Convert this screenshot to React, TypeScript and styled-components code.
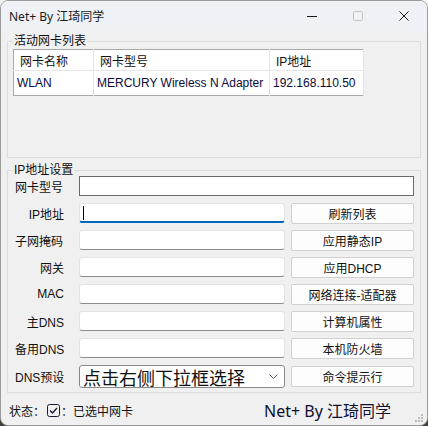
import styled, { createGlobalStyle } from 'styled-components';

const GlobalStyle = createGlobalStyle`
  html, body { margin: 0; padding: 0; }
  body {
    width: 428px;
    height: 426px;
    overflow: hidden;
    background: linear-gradient(#f4f4f4 0%, #f4f4f4 50%, #3d3d36 100%);
    font-family: "Liberation Sans", "Noto Sans CJK SC", sans-serif;
  }
`;

const Window = styled.div`
  width: 428px;
  height: 426px;
  box-sizing: border-box;
  border: 1px solid #9a9a9a;
  border-radius: 8px;
  overflow: hidden;
  display: flex;
  flex-direction: column;
  background: #f0f0f0;
`;

const TitleBar = styled.div`
  height: 30px;
  flex: none;
  display: flex;
  align-items: center;
  background: #eef2f6;
`;

const Title = styled.div`
  flex: 1;
  padding-left: 8px;
  font-family: "Noto Sans", "Noto Sans CJK SC", sans-serif;
  font-size: 12px;
  color: #1b1b1b;
`;

const CaptionButton = styled.div<{ $disabled?: boolean }>`
  width: 46px;
  height: 30px;
  display: flex;
  align-items: center;
  justify-content: center;
  color: ${p => (p.$disabled ? '#c4c4c4' : '#1b1b1b')};
`;

const Main = styled.div`
  flex: 1;
  padding: 4px 6px 0 6px;
  display: flex;
  flex-direction: column;
  gap: 6px;
`;

const Group = styled.fieldset<{ $h: number }>`
  margin: 0;
  height: ${p => p.$h}px;
  box-sizing: border-box;
  border: 1px solid #dcdcdc;
  padding: 2px 5px 0 5px;
`;

const Legend = styled.legend`
  padding: 0 1px;
  font-size: 12px;
  line-height: 12px;
  color: #111;
`;

const Table = styled.table`
  border-collapse: collapse;
  table-layout: fixed;
  width: 350px;
  background: #fff;
  border: 1px solid #a8a8a8;
  font-size: 12px;
  color: #111;
`;

const Th = styled.th`
  height: 20px;
  padding: 0 0 0 6px;
  font-weight: normal;
  text-align: left;
  border-right: 1px solid #e5e5e5;
  border-bottom: 1px solid #e5e5e5;
`;

const Td = styled.td`
  height: 24px;
  padding: 0 0 0 3px;
  color: #0a0a3a;
  border-right: 1px solid #e5e5e5;
  white-space: nowrap;
  overflow: hidden;
`;

const Form = styled.div`
  display: grid;
  grid-template-columns: 49px 335px;
  column-gap: 15px;
  row-gap: 7px;
  align-items: center;
  padding-left: 2px;
  margin-top: -2px;
`;

const FormRow = styled.div<{ $h?: number }>`
  display: grid;
  grid-template-columns: 206px 123px;
  grid-template-rows: ${p => p.$h ?? 20}px;
  column-gap: 6px;
  align-items: center;
`;

const Label = styled.div<{ $left?: boolean }>`
  font-size: 12px;
  color: #111;
  text-align: ${p => (p.$left ? 'left' : 'right')};
  white-space: nowrap;
`;

const Input = styled.div<{ $focus?: boolean; $classic?: boolean }>`
  height: 20px;
  box-sizing: border-box;
  background: #fff;
  border: 1px solid ${p => (p.$classic ? '#6a6a6a' : '#e3e3e3')};
  border-bottom: ${p =>
    p.$focus ? '2px solid #0067c0' : p.$classic ? '1px solid #6a6a6a' : '1px solid #8c8c8c'};
  border-radius: ${p => (p.$classic ? '0' : '3px')};
  position: relative;
`;

const Caret = styled.span`
  position: absolute;
  left: 3px;
  top: 2px;
  width: 1px;
  height: 14px;
  background: #000;
`;

const Button = styled.div`
  height: 21px;
  box-sizing: border-box;
  background: #fdfdfd;
  border: 1px solid #d0d0d0;
  border-radius: 2px;
  font-size: 12px;
  color: #111;
  display: flex;
  align-items: center;
  justify-content: center;
`;

const Select = styled.div`
  height: 23px;
  box-sizing: border-box;
  background: #fff;
  border: 1px solid #8a8a8a;
  border-radius: 3px;
  display: flex;
  align-items: center;
  padding: 0 6px 0 3px;
  font-size: 18px;
  color: #111;
`;

const SelectText = styled.span`
  flex: 1;
  white-space: nowrap;
  font-family: "Noto Sans CJK SC", sans-serif;
`;

const StatusBar = styled.div`
  height: 30px;
  flex: none;
  display: flex;
  align-items: center;
  padding: 0 4px 0 8px;
  font-size: 12px;
  color: #111;
`;

const StatusLeft = styled.div`
  flex: 1;
  display: flex;
  align-items: center;
  font-family: "Noto Sans CJK SC", sans-serif;
`;

const StatusRight = styled.div`
  font-size: 16px;
  color: #101030;
  font-family: "Noto Sans", "Noto Sans CJK SC", sans-serif;
`;

const Grip = styled.svg`
  margin-left: 24px;
  align-self: flex-end;
  margin-bottom: 3px;
`;

const buttons = ['刷新列表', '应用静态IP', '应用DHCP', '网络连接-适配器', '计算机属性', '本机防火墙'];
const labels: [string, boolean][] = [
  ['IP地址', false],
  ['子网掩码', true],
  ['网关', false],
  ['MAC', false],
  ['主DNS', false],
  ['备用DNS', true],
];

export default function App() {
  return (
    <>
      <GlobalStyle />
      <Window>
        <TitleBar>
          <Title>Net+ By 江琦同学</Title>
          <CaptionButton>
            <svg width="10" height="10"><path d="M0 5.5h10" stroke="currentColor" /></svg>
          </CaptionButton>
          <CaptionButton $disabled>
            <svg width="10" height="10"><rect x="0.5" y="0.5" width="9" height="9" rx="1" fill="none" stroke="currentColor" /></svg>
          </CaptionButton>
          <CaptionButton>
            <svg width="10" height="10"><path d="M0.5 0.5l9 9M9.5 0.5l-9 9" stroke="currentColor" /></svg>
          </CaptionButton>
        </TitleBar>
        <Main>
          <Group $h={123}>
            <Legend>活动网卡列表</Legend>
            <Table>
              <colgroup>
                <col style={{ width: 80 }} />
                <col style={{ width: 176 }} />
                <col style={{ width: 94 }} />
              </colgroup>
              <thead>
                <tr>
                  <Th>网卡名称</Th>
                  <Th>网卡型号</Th>
                  <Th>IP地址</Th>
                </tr>
              </thead>
              <tbody>
                <tr>
                  <Td>WLAN</Td>
                  <Td>MERCURY Wireless N Adapter</Td>
                  <Td>192.168.110.50</Td>
                </tr>
              </tbody>
            </Table>
          </Group>
          <Group $h={229}>
            <Legend>IP地址设置</Legend>
            <Form>
              <Label $left>网卡型号</Label>
              <Input $classic />
              {labels.map(([l, left], i) => (
                <>
                  <Label key={l} $left={left}>{l}</Label>
                  <FormRow key={l + 'g'}>
                    <Input $focus={i === 0}>{i === 0 && <Caret />}</Input>
                    <Button>{buttons[i]}</Button>
                  </FormRow>
                </>
              ))}
              <Label $left>DNS预设</Label>
              <FormRow $h={23}>
                <Select>
                  <SelectText>点击右侧下拉框选择</SelectText>
                  <svg width="9" height="5"><path d="M0.5 0.5l4 4 4-4" fill="none" stroke="#555" /></svg>
                </Select>
                <Button>命令提示行</Button>
              </FormRow>
            </Form>
          </Group>
        </Main>
        <StatusBar>
          <StatusLeft>
            <span>状态：</span>
            <svg width="13" height="13" style={{ margin: '0 1px 0 2px' }}>
              <rect x="0.5" y="0.5" width="12" height="12" rx="2" fill="none" stroke="#1a1a2a" />
              <path d="M3 6.5l2.5 2.5 4.5-5" fill="none" stroke="#1a1a2a" strokeWidth="1.3" />
            </svg>
            <span>：已选中网卡</span>
          </StatusLeft>
          <StatusRight>Net+ By 江琦同学</StatusRight>
          <Grip width="8" height="8">
            {[[6, 0], [3, 3], [6, 3], [0, 6], [3, 6], [6, 6]].map(([x, y]) => (
              <rect key={x + '-' + y} x={x} y={y} width="2" height="2" fill="#bbb" />
            ))}
          </Grip>
        </StatusBar>
      </Window>
    </>
  );
}
